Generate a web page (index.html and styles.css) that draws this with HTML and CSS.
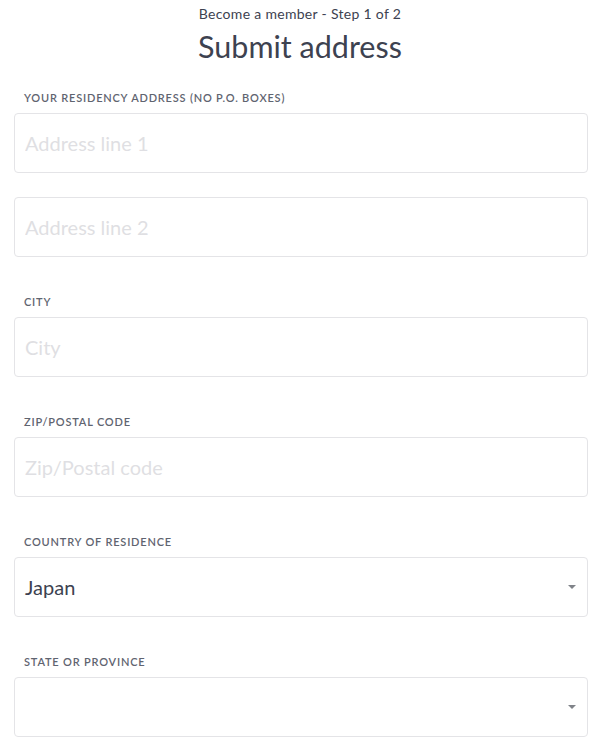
FILE: index.html
```html
<!DOCTYPE html>
<html lang="en">
<head>
<meta charset="utf-8">
<title>Submit address</title>
<link rel="stylesheet" href="styles.css">
</head>
<body>
<header class="head">
  <p class="step">Become a member - Step 1 of 2</p>
  <h1 class="title">Submit address</h1>
</header>
<form class="form">
  <div class="group">
    <label class="label" for="a1">YOUR RESIDENCY ADDRESS (NO P.O. BOXES)</label>
    <input class="field" id="a1" type="text" placeholder="Address line 1">
    <input class="field field-next" id="a2" type="text" placeholder="Address line 2">
  </div>
  <div class="group">
    <label class="label" for="city">CITY</label>
    <input class="field" id="city" type="text" placeholder="City">
  </div>
  <div class="group">
    <label class="label" for="zip">ZIP/POSTAL CODE</label>
    <input class="field" id="zip" type="text" placeholder="Zip/Postal code">
  </div>
  <div class="group">
    <span class="label">COUNTRY OF RESIDENCE</span>
    <div class="field select">
      <span class="value">Japan</span>
      <svg class="caret" width="10" height="6" viewBox="0 0 10 6"><path d="M1 1h8L5 5z" fill="#808389"/></svg>
    </div>
  </div>
  <div class="group">
    <span class="label">STATE OR PROVINCE</span>
    <div class="field select">
      <span class="value"></span>
      <svg class="caret" width="10" height="6" viewBox="0 0 10 6"><path d="M1 1h8L5 5z" fill="#808389"/></svg>
    </div>
  </div>
</form>
</body>
</html>
```
FILE: styles.css
```css
* { box-sizing: border-box; }
html, body { margin: 0; padding: 0; background: #fff; }
body {
  font-family: Lato, "Open Sans", "Liberation Sans", sans-serif;
  color: #3d4250;
  width: 600px;
}
.head { text-align: center; padding-top: 6px; }
.step {
  margin: 0;
  font-size: 14px;
  line-height: 16px;
  letter-spacing: 0.3px;
  color: #3d4250;
}
.title {
  margin: 6px 0 0;
  font-size: 30.5px;
  line-height: 36px;
  font-weight: 400;
  color: #3d4250;
}
.form { padding: 0 12px 0 14px; }
.group { display: flex; flex-direction: column; margin-top: 38px; }
.group:first-child { margin-top: 27px; }
.label {
  display: block;
  padding-left: 10px;
  font-size: 11px;
  line-height: 14px;
  letter-spacing: 0.8px;
  font-weight: 600;
  color: #5f6470;
  margin-bottom: 8px;
}
.field {
  display: block;
  width: 100%;
  height: 60px;
  border: 1px solid #e4e4e7;
  border-radius: 4px;
  padding: 0 10px;
  font-family: inherit;
  font-size: 20px;
  color: #3d4250;
  background: #fff;
  outline: none;
}
.field::placeholder { color: #dfdfe3; }
.field-next { margin-top: 24px; }
.select {
  display: flex;
  align-items: center;
  justify-content: space-between;
  padding-right: 10px;
}
.caret { flex: none; }
```
